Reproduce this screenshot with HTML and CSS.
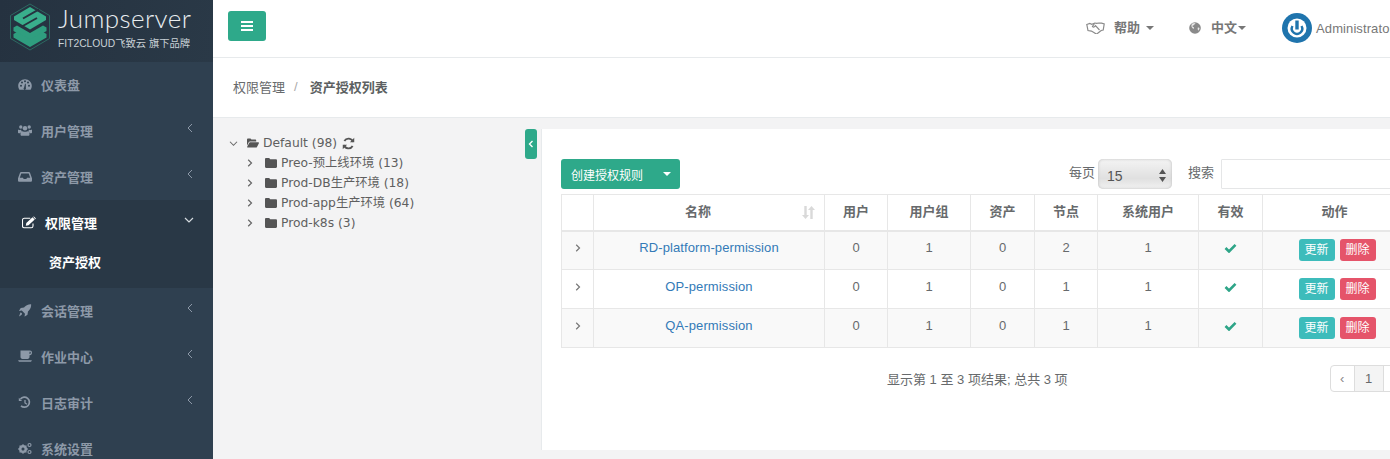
FILE: index.html
```html
<!DOCTYPE html>
<html lang="zh-CN">
<head>
    <meta charset="UTF-8">
    <title>Jumpserver</title>
    <link rel="stylesheet" href="styles.css">
</head>
<body>
    <svg class="defs" aria-hidden="true">
        <symbol id="i-folder" viewBox="0 0 12 10"><path d="M1.200 0h3l1 1.300h5.600c.7 0 1.200.5 1.200 1.200v6.300c0 .7-.5 1.200-1.200 1.200H1.200C.5 10 0 9.500 0 8.800V1.200C0 .5.500 0 1.200 0z"/></symbol>
        <symbol id="i-open" viewBox="0 0 13 10"><path d="M0 8V1.200C0 .5.500 0 1.200 0h2.600l1 1.300h4c.7 0 1.200.5 1.200 1.200V3.400H3.200C2.600 3.400 2.200 3.700 1.900 4.200z"/><path d="M3.300 4.300H12.300c.5 0 .8.500.6.900L10.800 9.300c-.2.400-.6.700-1.100.7H.8c-.5 0-.8-.5-.6-.9L2.300 4.900c.2-.4.600-.6 1-.6z"/></symbol>
        <symbol id="i-chev-r" viewBox="0 0 6 8"><path d="M1.200 .8L4.500 4 1.200 7.200" fill="none" stroke="currentColor" stroke-width="1.200"/></symbol>
        <symbol id="i-chev-d" viewBox="0 0 10 8"><path d="M1 2l4 4 4-4" fill="none" stroke="currentColor" stroke-width="1.200"/></symbol>
        <symbol id="i-chev-l" viewBox="0 0 8 10"><path d="M6 1L2 5l4 4" fill="none" stroke="currentColor" stroke-width="1"/></symbol>
    </svg>

    <div class="page">
        <aside class="sidebar">
            <div class="brand">
                <svg class="brand-logo" viewBox="0 0 42 48">
                    <path d="M21 1L40.500 12.500V35.500L21 47 1.500 35.500V12.500z" fill="none" stroke="#2c6a62" stroke-width="1"/>
                    <path d="M4.500 24.500l3.500-2 13 7.500 13-7.500 3.500 2V28L21 37.500 4.500 28z" fill="#2f9e7f"/>
                    <path d="M4.500 31l3.500-2 13 7.500 13-7.500 3.500 2V34.500L21 44 4.500 34.500z" fill="#2f9e7f"/>
                    <path d="M21 4L37 13.500V17L21 26.500 5 17V13.500z" fill="#39ae8c"/>
                    <path d="M30 6.400L14 15.500M12 24L28 15" fill="none" stroke="#26333f" stroke-width="2"/>
                </svg>
                <div class="brand-text">
                    <div class="brand-name">Jumpserver</div>
                    <div class="brand-sub">FIT2CLOUD飞致云 旗下品牌</div>
                </div>
            </div>
            <ul class="menu">
                <li class="menu-item">
                    <svg class="menu-icon" viewBox="0 0 14 12"><path fill-rule="evenodd" d="M7 .8C3.200.8.200 3.800.200 7.500c0 1.300.4 2.500 1 3.500.2.200.4.300.6.300h10.400c.2 0 .5-.1.600-.3.600-1 1-2.200 1-3.500C13.800 3.800 10.800.8 7 .8zM3 8.300a1 1 0 110-2 1 1 0 010 2zm1-3.200a1 1 0 110-2 1 1 0 010 2zm3.900 4.400a1.200 1.200 0 11-1.800-.6l.9-3.700h.8zM7 3.700a1 1 0 110-2 1 1 0 010 2zm3 1.400a1 1 0 110-2 1 1 0 010 2zm1 3.200a1 1 0 110-2 1 1 0 010 2z"/></svg>
                    <span>仪表盘</span>
                </li>
                <li class="menu-item">
                    <svg class="menu-icon" viewBox="0 0 15 12"><circle cx="3" cy="2.300" r="1.800"/><circle cx="12" cy="2.300" r="1.800"/><circle cx="7.500" cy="3.500" r="2.400"/><path d="M0 4.800c.8.500 2.300.8 3.300.5.100.9.500 1.500 1 2-.9.200-1.600.8-2 1.700H.7C.3 9 0 8.700 0 8.200zM15 4.800c-.8.500-2.300.8-3.300.5-.1.900-.5 1.500-1 2 .9.200 1.600.8 2 1.700h1.600c.4 0 .7-.3.700-.8zM5 6.800c1.500.8 3.500.8 5 0 1.300.3 2.300 1.300 2.300 3v.6c0 .8-.5 1.300-1.300 1.300H4c-.8 0-1.300-.5-1.300-1.300v-.6c0-1.700 1-2.700 2.300-3z"/></svg>
                    <span>用户管理</span>
                    <svg class="menu-arrow"><use href="#i-chev-l"/></svg>
                </li>
                <li class="menu-item">
                    <svg class="menu-icon" viewBox="0 0 14 12"><path fill-rule="evenodd" d="M3.200 1.500h7.600c.5 0 .9.200 1.100.6l1.800 5c.2.300.3.600.3.900v2c0 .7-.6 1.300-1.300 1.300H1.300C.6 11.300 0 10.700 0 10V8c0-.3.100-.6.300-.9l1.800-5c.2-.4.600-.6 1.100-.6zM3.300 2.900L1.800 7.200h3.100l.8 1.400h2.600l.8-1.400h3.100l-1.500-4.300z"/></svg>
                    <span>资产管理</span>
                    <svg class="menu-arrow"><use href="#i-chev-l"/></svg>
                </li>
                <li class="menu-group">
                    <div class="menu-item menu-item-active">
                        <svg class="menu-icon" viewBox="0 0 14 12"><path d="M11 7v2.500c0 1-.8 1.800-1.800 1.800H2.300c-1 0-1.800-.8-1.800-1.800V3.600c0-1 .8-1.800 1.800-1.800h6" fill="none" stroke="currentColor" stroke-width="1.100"/><path d="M4.300 6.500L10.500.8l2.200 2.200-6.200 5.700-2.700.6zM11.200.2l.5-.2c.2 0 .3 0 .5.200l1.500 1.500c.2.200.2.400 0 .6l-.5.400z"/></svg>
                        <span>权限管理</span>
                        <svg class="menu-arrow menu-arrow-down"><use href="#i-chev-d"/></svg>
                    </div>
                    <div class="submenu-item">资产授权</div>
                </li>
                <li class="menu-item">
                    <svg class="menu-icon" viewBox="0 0 14 14"><path d="M13.600.3c.2 2.800-.6 5-2.600 7l-.8.700-.5 3.600L6.800 13.400l-.3-.2.500-2.700L3.500 7 .8 7.500l-.2-.3L2.400 4.300 6 3.800l.7-.8C8.700 1 10.900.1 13.600.3zM2 9.300c1-.3 2 .8 1.700 1.800C3 12.300 1.700 13 .5 13.500c.4-1.200 1-3 1.500-4.200z"/></svg>
                    <span>会话管理</span>
                    <svg class="menu-arrow"><use href="#i-chev-l"/></svg>
                </li>
                <li class="menu-item">
                    <svg class="menu-icon" viewBox="0 0 14 12"><path fill-rule="evenodd" d="M2.500 0H12c1.100 0 2 .9 2 2.300S13.100 4.800 12 4.800h-.5v1.700c0 1.100-.8 1.900-1.900 1.900H4.400c-1.100 0-1.900-.8-1.900-1.900zM11.500 1.200v2.300h.4c.5 0 .9-.5.900-1.200s-.4-1.100-.9-1.100zM.2 9.800h13.600c0 .9-.6 1.500-1.400 1.500H1.600C.8 11.300.2 10.700.2 9.800z"/></svg>
                    <span>作业中心</span>
                    <svg class="menu-arrow"><use href="#i-chev-l"/></svg>
                </li>
                <li class="menu-item">
                    <svg class="menu-icon menu-icon-line" viewBox="0 0 14 12"><path d="M2.500 2.500A5 5 0 113 9.300" fill="none" stroke="currentColor" stroke-width="1.700"/><path d="M.8 1.300v3.300h3.300z"/><path d="M7 3.500v3l2 1.300" fill="none" stroke="currentColor" stroke-width="1.300"/></svg>
                    <span>日志审计</span>
                    <svg class="menu-arrow"><use href="#i-chev-l"/></svg>
                </li>
                <li class="menu-item">
                    <svg class="menu-icon" viewBox="0 0 14 12"><circle cx="5" cy="6.500" r="3" fill="none" stroke="currentColor" stroke-width="2"/><path d="M5 1.700V11.300M.2 6.500H9.800M1.600 3.100l6.800 6.800M8.400 3.100L1.600 9.900" stroke="currentColor" stroke-width="1.300"/><circle cx="5" cy="6.500" r="1.500" fill="#2f4050"/><circle cx="11.500" cy="2.500" r="1.500" fill="none" stroke="currentColor" stroke-width="1.200"/><circle cx="11.500" cy="9.500" r="1.500" fill="none" stroke="currentColor" stroke-width="1.200"/></svg>
                    <span>系统设置</span>
                </li>
            </ul>
        </aside>

        <main class="main">
            <header class="topbar">
                <button class="toggle-btn" type="button">
                    <span></span><span></span><span></span>
                </button>
                <nav class="topnav">
                    <div class="topnav-item topnav-help">
                        <svg class="nav-icon" width="19" height="12" viewBox="0 0 19 12"><path d="M.8 2.500l3-1 2 .8 3-1.300 2 .3 2-.3 2.700.2 2.700.8-1 6-2 .5-3.800 3-1.500.3-2-1.200-2.500-1.500L2 8.500z" fill="none" stroke="#8a8a8a" stroke-width="1.200"/><path d="M8.500 1.500L6.500 4.500c1 1 2 .5 3-.8l4 4.300" fill="none" stroke="#8a8a8a" stroke-width="1.200"/></svg>
                        <b>帮助</b><i class="caret"></i>
                    </div>
                    <div class="topnav-item topnav-lang">
                        <svg class="nav-icon" width="12" height="12" viewBox="0 0 12 12"><circle cx="6" cy="6" r="5.800" fill="#8a8a8a"/><path d="M3.800 1.200c.8.300 1.400.1 2-.2.600.2.800.7.400 1.100-.5.400-1.100.3-1.300.9-.2.700-1 .4-1.300.8-.3.500.1 1.200.8 1.300.7.100.7.900.4 1.300-.2.300-.3.400-.6.300C3 5.900 2.400 4.900 2.400 3.500c0-.9.600-1.700 1.400-2.300zM9 5.500c.6-.3 1.200 0 1.500.4 0 1.100-.5 2.100-1.200 2.700-.4-.3-.7-.9-.6-1.500.1-.6-.2-1.200.3-1.600z" fill="#e8e8e8"/></svg>
                        <b>中文</b><i class="caret caret-tight"></i>
                    </div>
                    <div class="topnav-item topnav-user">
                        <svg class="avatar" viewBox="0 0 30 30"><circle cx="15" cy="15" r="15" fill="#1f74ad"/><circle cx="15" cy="15" r="9.500" fill="#fff"/><path d="M15 7.500v9" stroke="#1f74ad" stroke-width="3.400"/><path d="M10.500 13a5.200 5.200 0 109 0" fill="none" stroke="#1f74ad" stroke-width="2.400"/></svg>
                        <span>Administrator</span>
                    </div>
                </nav>
            </header>

            <div class="breadcrumb">
                <span>权限管理</span>
                <span class="breadcrumb-sep">/</span>
                <b>资产授权列表</b>
            </div>

            <div class="content">
                <section class="tree">
                    <button class="tree-toggle" type="button">
                        <svg width="6" height="8" viewBox="0 0 8 10"><path d="M6 1L2 5l4 4" fill="none" stroke="#fff" stroke-width="1.800"/></svg>
                    </button>
                    <div class="tree-root">
                        <svg class="tree-arrow-down"><use href="#i-chev-d"/></svg>
                        <svg class="tree-open"><use href="#i-open"/></svg>
                        <span>Default (98)</span>
                        <svg class="tree-refresh" viewBox="0 0 12 12"><path d="M10.200 4.500A4.400 4.400 0 002.200 3.700M1.800 7.500a4.400 4.400 0 008 .8" fill="none" stroke="#555" stroke-width="1.700"/><path d="M11.300.8v4H7.300zM.7 11.200v-4h4z" fill="#555"/></svg>
                    </div>
                    <div class="tree-node">
                        <svg class="tree-arrow"><use href="#i-chev-r"/></svg>
                        <svg class="tree-folder"><use href="#i-folder"/></svg>
                        <span>Preo-预上线环境 (13)</span>
                    </div>
                    <div class="tree-node">
                        <svg class="tree-arrow"><use href="#i-chev-r"/></svg>
                        <svg class="tree-folder"><use href="#i-folder"/></svg>
                        <span>Prod-DB生产环境 (18)</span>
                    </div>
                    <div class="tree-node">
                        <svg class="tree-arrow"><use href="#i-chev-r"/></svg>
                        <svg class="tree-folder"><use href="#i-folder"/></svg>
                        <span>Prod-app生产环境 (64)</span>
                    </div>
                    <div class="tree-node">
                        <svg class="tree-arrow"><use href="#i-chev-r"/></svg>
                        <svg class="tree-folder"><use href="#i-folder"/></svg>
                        <span>Prod-k8s (3)</span>
                    </div>
                </section>

                <section class="card">
                    <div class="toolbar">
                        <div class="create-btn">
                            <span>创建授权规则</span>
                            <i class="caret caret-white"></i>
                        </div>
                        <label class="page-size">每页
                            <span class="fake-select">15
                                <svg width="7" height="13" viewBox="0 0 7 13"><path d="M3.500 0L7 5H0zM3.500 13L0 8h7z" fill="#555"/></svg>
                            </span>
                        </label>
                        <label class="search">搜索<input type="text"></label>
                    </div>

                    <table class="grid">
                        <colgroup>
                            <col class="c-expand"><col class="c-name"><col class="c-user"><col class="c-group">
                            <col class="c-asset"><col class="c-node"><col class="c-sys"><col class="c-valid"><col class="c-act">
                        </colgroup>
                        <thead>
                            <tr>
                                <th></th>
                                <th class="sortable">名称
                                    <svg class="sort-icon" width="13" height="13" viewBox="0 0 13 13"><path d="M3.500 13L0 9h2.300V0h2.400v9H7zM9.500 0L13 4h-2.300v9H8.300V4H6z" fill="#d9d9d9"/></svg>
                                </th>
                                <th>用户</th><th>用户组</th><th>资产</th><th>节点</th><th>系统用户</th><th>有效</th><th>动作</th>
                            </tr>
                        </thead>
                        <tbody>
                            <tr class="row-odd">
                                <td><svg class="row-arrow"><use href="#i-chev-r"/></svg></td>
                                <td><a href="#">RD-platform-permission</a></td>
                                <td>0</td><td>1</td><td>0</td><td>2</td><td>1</td>
                                <td><svg class="check" viewBox="0 0 13 10"><path d="M1.500 5l3.500 3.500L11.500 1.800" fill="none" stroke="#2ea588" stroke-width="2.600"/></svg></td>
                                <td class="cell-actions"><span class="btn-xs btn-update">更新</span><span class="btn-xs btn-delete">删除</span></td>
                            </tr>
                            <tr>
                                <td><svg class="row-arrow"><use href="#i-chev-r"/></svg></td>
                                <td><a href="#">OP-permission</a></td>
                                <td>0</td><td>1</td><td>0</td><td>1</td><td>1</td>
                                <td><svg class="check" viewBox="0 0 13 10"><path d="M1.500 5l3.500 3.500L11.500 1.800" fill="none" stroke="#2ea588" stroke-width="2.600"/></svg></td>
                                <td class="cell-actions"><span class="btn-xs btn-update">更新</span><span class="btn-xs btn-delete">删除</span></td>
                            </tr>
                            <tr class="row-odd">
                                <td><svg class="row-arrow"><use href="#i-chev-r"/></svg></td>
                                <td><a href="#">QA-permission</a></td>
                                <td>0</td><td>1</td><td>0</td><td>1</td><td>1</td>
                                <td><svg class="check" viewBox="0 0 13 10"><path d="M1.500 5l3.500 3.500L11.500 1.800" fill="none" stroke="#2ea588" stroke-width="2.600"/></svg></td>
                                <td class="cell-actions"><span class="btn-xs btn-update">更新</span><span class="btn-xs btn-delete">删除</span></td>
                            </tr>
                        </tbody>
                    </table>

                    <div class="table-foot">
                        <div class="table-info">显示第 1 至 3 项结果; 总共 3 项</div>
                        <div class="pager">
                            <span class="pager-prev">‹</span>
                            <span class="pager-cur">1</span>
                            <span class="pager-next"></span>
                        </div>
                    </div>
                </section>
            </div>
        </main>
    </div>
</body>
</html>
```

FILE: styles.css
```css
* {
    margin: 0;
    padding: 0;
    box-sizing: border-box;
}

html, body {
    height: 100%;
    overflow: hidden;
}

body {
    font-family: "Liberation Sans", "Noto Sans CJK SC", sans-serif;
    font-size: 13px;
    color: #676a6c;
    background: #f3f3f4;
}

.defs {
    display: none;
}

.page {
    display: flex;
    width: 1390px;
    height: 459px;
    overflow: hidden;
}

/* sidebar */
.sidebar {
    flex: 0 0 213px;
    background: #2f4050;
    overflow: hidden;
}

.brand {
    display: flex;
    height: 62px;
    padding: 3px 0 0 9px;
    background: linear-gradient(100deg, #253240, #2a3947);
    color: #e8edf0;
}

.brand-logo {
    width: 42px;
    height: 48px;
    flex: none;
}

.brand-text {
    margin-left: 7px;
}

.brand-name {
    font-family: "Lato", sans-serif;
    font-weight: 300;
    font-size: 26px;
    line-height: 30px;
    letter-spacing: .4px;
}

.brand-sub {
    font-size: 10.300px;
    line-height: 16px;
    margin-top: 3px;
    color: #c9d1d6;
    white-space: nowrap;
}

.menu {
    list-style: none;
}

.menu-item {
    position: relative;
    display: flex;
    align-items: center;
    height: 46px;
    padding-left: 18px;
    padding-bottom: 2px;
    font-weight: 700;
    color: #8d99a8;
}

.menu-icon {
    width: 14px;
    height: 13px;
    margin-right: 9px;
    fill: currentColor;
    flex: none;
}

.menu-arrow {
    position: absolute;
    right: 19px;
    top: 15px;
    width: 8px;
    height: 10px;
    color: #8d99a8;
}

.menu-group {
    height: 88px;
    background: #293846;
}

.menu-item-active {
    padding-left: 22px;
    color: #fff;
}

.menu-arrow-down {
    right: 19px;
    top: 16px;
    width: 10px;
    height: 8px;
    color: #d5dbe0;
}

.submenu-item {
    padding-left: 49px;
    line-height: 34px;
    font-weight: 700;
    color: #fff;
}

/* top bar */
.main {
    flex: 0 0 1177px;
    min-width: 0;
    overflow: hidden;
}

.topbar {
    display: flex;
    height: 58px;
    padding: 11px 0 0 15px;
    background: #fff;
    border-bottom: 1px solid #e7eaec;
}

.toggle-btn {
    display: flex;
    flex: none;
    flex-direction: column;
    align-items: center;
    justify-content: center;
    gap: 2px;
    width: 38px;
    height: 30px;
    border: 0;
    border-radius: 3px;
    background: #2ea98a;
}

.toggle-btn span {
    width: 12px;
    height: 2px;
    background: #fff;
}

.topnav {
    display: flex;
    flex: none;
    margin-left: 820px;
    height: 34px;
    align-items: center;
    white-space: nowrap;
}

.topnav-item {
    display: flex;
    align-items: center;
}

.topnav-item b {
    margin-top: -3px;
    font-size: 13px;
    color: #777;
}

.topnav-help .nav-icon {
    margin-right: 9px;
}

.topnav-lang {
    margin-left: 35px;
}

.topnav-lang .nav-icon {
    margin-right: 10px;
}

.topnav-user {
    margin-left: 36px;
    color: #777;
    letter-spacing: .1px;
}

.avatar {
    width: 30px;
    height: 30px;
    margin-right: 4px;
}

.caret {
    display: inline-block;
    margin-left: 6px;
    border-top: 4px solid #777;
    border-left: 4px solid transparent;
    border-right: 4px solid transparent;
}

.caret-tight {
    margin-left: 1px;
}

/* breadcrumb */
.breadcrumb {
    display: flex;
    align-items: center;
    height: 60px;
    padding: 0 0 2px 20px;
    background: #fff;
    border-bottom: 1px solid #e7eaec;
}

.breadcrumb-sep {
    margin: 0 12px 0 9px;
    color: #aaa;
}

.breadcrumb b {
    color: #5c5f61;
}

/* tree and card */
.content {
    display: flex;
    height: 342px;
    padding-top: 11px;
}

.tree {
    position: relative;
    flex: 0 0 328px;
    padding: 4px 0 0 16px;
    font-family: "DejaVu Sans", "Noto Sans CJK SC", sans-serif;
    font-size: 12.300px;
    color: #5f5f5f;
}

.tree-toggle {
    position: absolute;
    top: 0;
    left: 312px;
    display: flex;
    align-items: center;
    justify-content: center;
    width: 12px;
    height: 30px;
    border: 0;
    border-radius: 3px;
    background: #2ea98a;
}

.tree-root, .tree-node {
    display: flex;
    align-items: center;
    height: 20px;
    line-height: 20px;
}

.tree-arrow-down {
    width: 9px;
    height: 7px;
    margin-right: 9px;
    color: #666;
}

.tree-open {
    width: 12px;
    height: 10px;
    margin-right: 4px;
    fill: #555;
}

.tree-refresh {
    width: 13px;
    height: 13px;
    margin-left: 5px;
}

.tree-node {
    padding-left: 18px;
}

.tree-arrow {
    width: 6px;
    height: 8px;
    margin-right: 12px;
    color: #666;
}

.tree-folder {
    width: 12px;
    height: 10px;
    margin-right: 4px;
    fill: #555;
}

.card {
    flex: none;
    width: 880px;
    height: 321px;
    padding: 30px 0 0 19px;
    background: #fff;
    border-left: 1px solid #e7eaec;
}

.toolbar {
    display: flex;
    align-items: flex-start;
    height: 35px;
}

.create-btn {
    display: flex;
    flex: none;
    align-items: center;
    width: 119px;
    height: 30px;
    padding-left: 10px;
    border-radius: 3px;
    background: #2ea98a;
    color: #fff;
    font-size: 12px;
}

.caret-white {
    margin-left: 20px;
    border-top-color: #fff;
}

.page-size {
    display: flex;
    flex: none;
    align-items: center;
    margin-left: 389px;
    height: 24px;
    white-space: nowrap;
    gap: 3px;
}

.fake-select {
    display: flex;
    align-items: center;
    justify-content: space-between;
    width: 74px;
    height: 30px;
    margin-top: 6px;
    padding: 3px 6px 0 9px;
    border-radius: 5px;
    font-size: 14px;
    color: #555;
    background: linear-gradient(#f4f4f4, #e6e6e6 45%, #e0e0e0 65%, #f2f2f2);
    box-shadow: inset 0 0 3px #bbb;
}

.search {
    display: flex;
    flex: none;
    align-items: center;
    height: 24px;
    margin-left: 16px;
    white-space: nowrap;
}

.search input {
    flex: none;
    width: 200px;
    height: 30px;
    margin: 6px 0 0 7px;
    border: 1px solid #e5e6e7;
    border-radius: 1px;
}

.grid {
    width: 845px;
    table-layout: fixed;
    border-collapse: collapse;
    color: #676a6c;
}

.c-expand { width: 32px; }
.c-name { width: 231px; }
.c-user { width: 63px; }
.c-group { width: 83px; }
.c-asset { width: 64px; }
.c-node { width: 63px; }
.c-sys { width: 101px; }
.c-valid { width: 64px; }
.c-act { width: 144px; }

.grid th, .grid td {
    border: 1px solid #e7e7e7;
    text-align: center;
}

.grid th {
    height: 36px;
    padding-bottom: 4px;
    border-bottom-width: 2px;
    color: #676a6c;
}

.grid .sortable {
    position: relative;
    padding-right: 22px;
}

.sort-icon {
    position: absolute;
    top: 11px;
    right: 9px;
}

.grid td {
    height: 39px;
    padding-bottom: 6px;
}

.grid .cell-actions {
    padding-bottom: 0;
}

.row-odd {
    background: #f9f9f9;
}

.grid a {
    color: #337ab7;
    text-decoration: none;
    letter-spacing: .1px;
}

.row-arrow {
    display: inline-block;
    width: 6px;
    height: 8px;
    color: #777;
    vertical-align: middle;
}

.check {
    display: inline-block;
    width: 13px;
    height: 10px;
    vertical-align: middle;
}

.btn-xs {
    display: inline-block;
    width: 36px;
    height: 22px;
    margin-left: 5px;
    border-radius: 3px;
    line-height: 22px;
    font-size: 12px;
    color: #fff;
    vertical-align: middle;
}

.btn-update {
    background: #3dbcbb;
}

.btn-delete {
    background: #e5546a;
}

.table-foot {
    display: flex;
    align-items: flex-start;
    padding-top: 17px;
}

.table-info {
    margin-left: 326px;
    line-height: 30px;
    font-size: 13px;
    white-space: nowrap;
}

.pager {
    display: flex;
    height: 27px;
    margin-left: 262px;
    border: 1px solid #ddd;
    border-radius: 4px;
    line-height: 25px;
    text-align: center;
}

.pager-prev {
    width: 23px;
    color: #888;
}

.pager-cur {
    width: 30px;
    border-left: 1px solid #ddd;
    border-right: 1px solid #ddd;
    background: #f4f4f4;
}

.pager-next {
    width: 30px;
}
```
